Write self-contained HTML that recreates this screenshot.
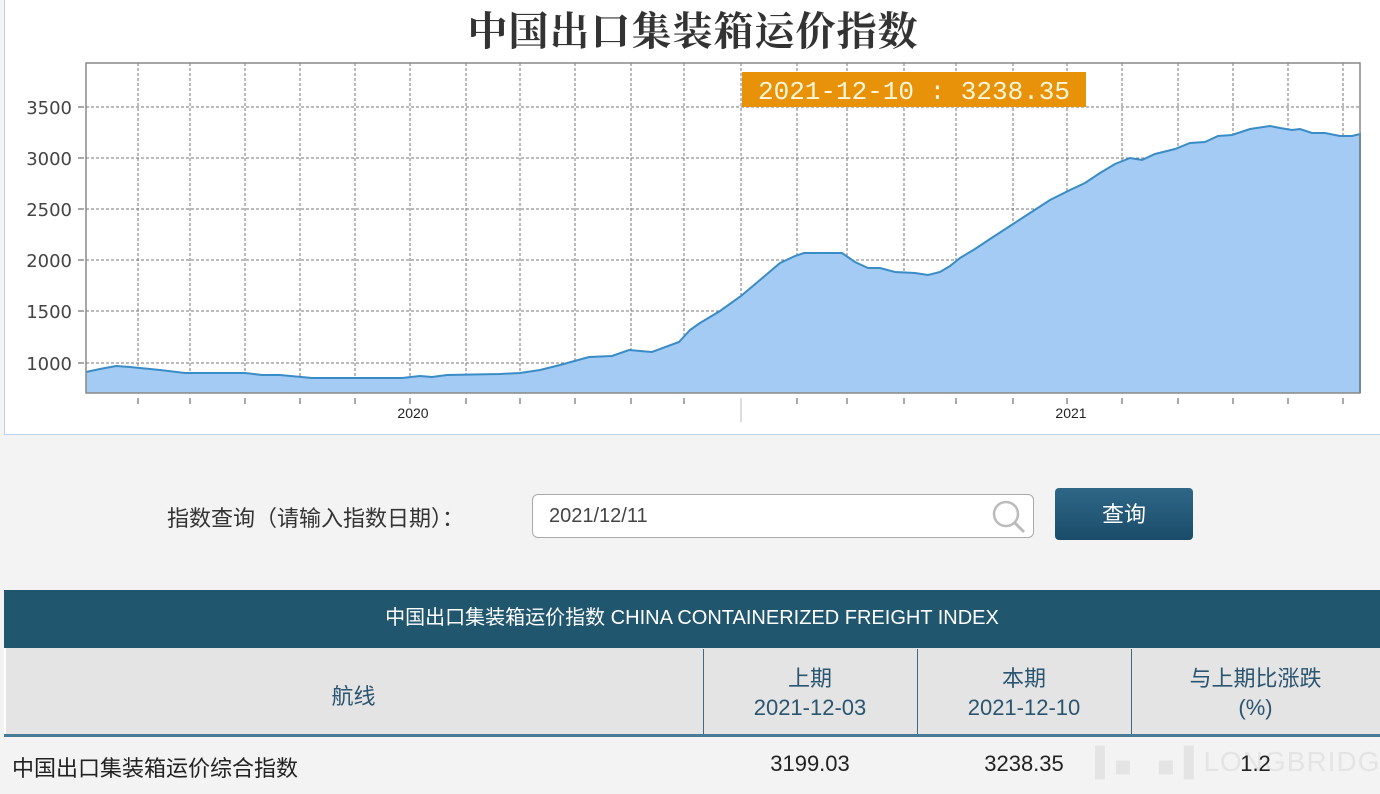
<!DOCTYPE html>
<html><head><meta charset="utf-8"><style>
*{margin:0;padding:0;box-sizing:border-box}
html,body{width:1380px;height:794px;overflow:hidden}
body{background:#f3f3f3;font-family:"Liberation Sans","Noto Sans CJK SC",sans-serif;position:relative}
.chartbox{position:absolute;left:4px;top:0;width:1380px;height:435px;background:#fff;border-left:1px solid #b8d4ea;border-bottom:1px solid #b8d4ea}
.abs{position:absolute}
</style></head><body>
<div class="chartbox"></div>
<div class="abs" style="left:0;top:0px;width:1386px;text-align:center;font-family:'Noto Serif CJK SC','Noto Sans CJK SC',serif;font-weight:bold;font-size:40px;color:#333;letter-spacing:1px">中国出口集装箱运价指数</div>
<svg class="abs" style="left:0;top:0" width="1380" height="435">
<g stroke="#777" stroke-width="1" stroke-dasharray="3,2" fill="none">
<line x1="86" x2="1360" y1="107" y2="107"/><line x1="86" x2="1360" y1="158" y2="158"/><line x1="86" x2="1360" y1="209" y2="209"/><line x1="86" x2="1360" y1="260" y2="260"/><line x1="86" x2="1360" y1="311" y2="311"/><line x1="86" x2="1360" y1="363" y2="363"/>
<line x1="138" x2="138" y1="63" y2="393"/><line x1="190" x2="190" y1="63" y2="393"/><line x1="245" x2="245" y1="63" y2="393"/><line x1="300" x2="300" y1="63" y2="393"/><line x1="355" x2="355" y1="63" y2="393"/><line x1="410" x2="410" y1="63" y2="393"/><line x1="466" x2="466" y1="63" y2="393"/><line x1="520" x2="520" y1="63" y2="393"/><line x1="575" x2="575" y1="63" y2="393"/><line x1="631" x2="631" y1="63" y2="393"/><line x1="684" x2="684" y1="63" y2="393"/><line x1="741" x2="741" y1="63" y2="393"/><line x1="797" x2="797" y1="63" y2="393"/><line x1="847" x2="847" y1="63" y2="393"/><line x1="904" x2="904" y1="63" y2="393"/><line x1="956" x2="956" y1="63" y2="393"/><line x1="1013" x2="1013" y1="63" y2="393"/><line x1="1067" x2="1067" y1="63" y2="393"/><line x1="1122" x2="1122" y1="63" y2="393"/><line x1="1178" x2="1178" y1="63" y2="393"/><line x1="1233" x2="1233" y1="63" y2="393"/><line x1="1288" x2="1288" y1="63" y2="393"/><line x1="1343" x2="1343" y1="63" y2="393"/>
</g>
<polygon fill="#a4cbf3" stroke="none" points="86,393 86,372 100,369 116,366 130,367 160,370 185,373 245,373 262,375 280,375 312,378 402,378 420,376 432,377 447,375 500,374 520,373 540,370 560,365 589,357 612,356 629,350 640,351 652,352 679,342 690,330 700,323 720,311 741,296 760,280 780,263 795,256 804,253 842,253 855,262 868,268 880,268 895,272 915,273 928,275 940,272 950,266 960,258 975,249 990,239 1010,226 1030,213 1050,200 1070,190 1085,183 1100,173 1115,164 1130,158 1142,160 1155,154 1175,149 1190,143 1205,142 1218,136 1232,135 1250,129 1270,126 1280,128 1292,130 1300,129 1312,133 1325,133 1340,136 1352,136 1360,134 1360,393"/>
<polyline fill="none" stroke="#3a8cc6" stroke-width="2" points="86,372 100,369 116,366 130,367 160,370 185,373 245,373 262,375 280,375 312,378 402,378 420,376 432,377 447,375 500,374 520,373 540,370 560,365 589,357 612,356 629,350 640,351 652,352 679,342 690,330 700,323 720,311 741,296 760,280 780,263 795,256 804,253 842,253 855,262 868,268 880,268 895,272 915,273 928,275 940,272 950,266 960,258 975,249 990,239 1010,226 1030,213 1050,200 1070,190 1085,183 1100,173 1115,164 1130,158 1142,160 1155,154 1175,149 1190,143 1205,142 1218,136 1232,135 1250,129 1270,126 1280,128 1292,130 1300,129 1312,133 1325,133 1340,136 1352,136 1360,134 1360,393"/>
<rect x="86" y="63" width="1274" height="330" fill="none" stroke="#888" stroke-width="1.5"/>
<g stroke="#555" stroke-width="1">
<line x1="78" x2="84" y1="107" y2="107"/><line x1="78" x2="84" y1="158" y2="158"/><line x1="78" x2="84" y1="209" y2="209"/><line x1="78" x2="84" y1="260" y2="260"/><line x1="78" x2="84" y1="311" y2="311"/><line x1="78" x2="84" y1="363" y2="363"/>
<line x1="138" x2="138" y1="398" y2="404"/><line x1="190" x2="190" y1="398" y2="404"/><line x1="245" x2="245" y1="398" y2="404"/><line x1="300" x2="300" y1="398" y2="404"/><line x1="355" x2="355" y1="398" y2="404"/><line x1="410" x2="410" y1="398" y2="404"/><line x1="466" x2="466" y1="398" y2="404"/><line x1="520" x2="520" y1="398" y2="404"/><line x1="575" x2="575" y1="398" y2="404"/><line x1="631" x2="631" y1="398" y2="404"/><line x1="684" x2="684" y1="398" y2="404"/><line x1="741" x2="741" y1="398" y2="422" stroke="#bbb"/><line x1="797" x2="797" y1="398" y2="404"/><line x1="847" x2="847" y1="398" y2="404"/><line x1="904" x2="904" y1="398" y2="404"/><line x1="956" x2="956" y1="398" y2="404"/><line x1="1013" x2="1013" y1="398" y2="404"/><line x1="1067" x2="1067" y1="398" y2="404"/><line x1="1122" x2="1122" y1="398" y2="404"/><line x1="1178" x2="1178" y1="398" y2="404"/><line x1="1233" x2="1233" y1="398" y2="404"/><line x1="1288" x2="1288" y1="398" y2="404"/><line x1="1343" x2="1343" y1="398" y2="404"/>
</g>
<g font-family="DejaVu Sans,sans-serif" font-size="18" fill="#444" text-anchor="end">
<text x="72" y="114">3500</text><text x="72" y="165">3000</text><text x="72" y="216">2500</text><text x="72" y="267">2000</text><text x="72" y="318">1500</text><text x="72" y="370">1000</text>
</g>
<g font-family="Liberation Sans,sans-serif" font-size="14" fill="#222" text-anchor="middle"><text x="413" y="418">2020</text><text x="1071" y="418">2021</text></g>
<rect x="742" y="72" width="344" height="35" fill="#e8920a"/>
<text x="914" y="99" text-anchor="middle" font-family="Liberation Mono,monospace" font-size="26" fill="#fff6d8" textLength="312" lengthAdjust="spacingAndGlyphs">2021-12-10 : 3238.35</text>
</svg>

<div class="abs" style="left:167px;top:501px;font-size:22px;color:#333;white-space:nowrap">指数查询（请输入指数日期）：</div>
<div class="abs" style="left:532px;top:494px;width:502px;height:44px;background:#fff;border:1px solid #aaa;border-radius:6px;font-size:20px;color:#444;padding:10px 0 0 16px">2021/12/11</div>
<svg class="abs" style="left:988px;top:496px" width="40" height="40"><circle cx="18" cy="18" r="12" fill="none" stroke="#bbb" stroke-width="2.5"/><line x1="27" y1="27" x2="36" y2="36" stroke="#bbb" stroke-width="3"/></svg>
<div class="abs" style="left:1055px;top:488px;width:138px;height:52px;border-radius:4px;background:linear-gradient(#2f6787,#1a4c69);color:#fff;font-size:22px;text-align:center;line-height:54px">查询</div>

<div class="abs" style="left:4px;top:590px;width:1376px;height:58px;background:#21566f;color:#fff;font-size:20px;text-align:center;line-height:56px">中国出口集装箱运价指数 CHINA CONTAINERIZED FREIGHT INDEX</div>
<div class="abs" style="left:4px;top:648px;width:1376px;height:86px;background:#e4e4e4;border-left:2px solid #fff"></div>
<div class="abs" style="left:703px;top:649px;width:1px;height:85px;background:#3d6b85"></div>
<div class="abs" style="left:917px;top:649px;width:1px;height:85px;background:#3d6b85"></div>
<div class="abs" style="left:1131px;top:649px;width:1px;height:85px;background:#3d6b85"></div>
<div class="abs" style="left:4px;top:734px;width:1376px;height:3px;background:#4a7a95"></div>
<div class="abs" style="left:4px;top:679px;width:699px;text-align:center;font-size:22px;color:#2a5570">航线</div>
<div class="abs" style="left:703px;top:664px;width:214px;text-align:center;font-size:22px;color:#2a5570;line-height:29px">上期<br>2021-12-03</div>
<div class="abs" style="left:917px;top:664px;width:214px;text-align:center;font-size:22px;color:#2a5570;line-height:29px">本期<br>2021-12-10</div>
<div class="abs" style="left:1131px;top:664px;width:249px;text-align:center;font-size:22px;color:#2a5570;line-height:29px">与上期比涨跌<br>(%)</div>
<div class="abs" style="left:1095px;top:742px;height:40px;white-space:nowrap;font-size:28px;color:#e4e4e4;letter-spacing:1px;line-height:40px">▌▖▗▐ LONGBRIDGE</div>
<div class="abs" style="left:12px;top:751px;font-size:22px;color:#222;white-space:nowrap">中国出口集装箱运价综合指数</div>
<div class="abs" style="left:703px;top:751px;width:214px;text-align:center;font-size:22px;color:#222">3199.03</div>
<div class="abs" style="left:917px;top:751px;width:214px;text-align:center;font-size:22px;color:#222">3238.35</div>
<div class="abs" style="left:1131px;top:751px;width:249px;text-align:center;font-size:22px;color:#222">1.2</div>
</body></html>
